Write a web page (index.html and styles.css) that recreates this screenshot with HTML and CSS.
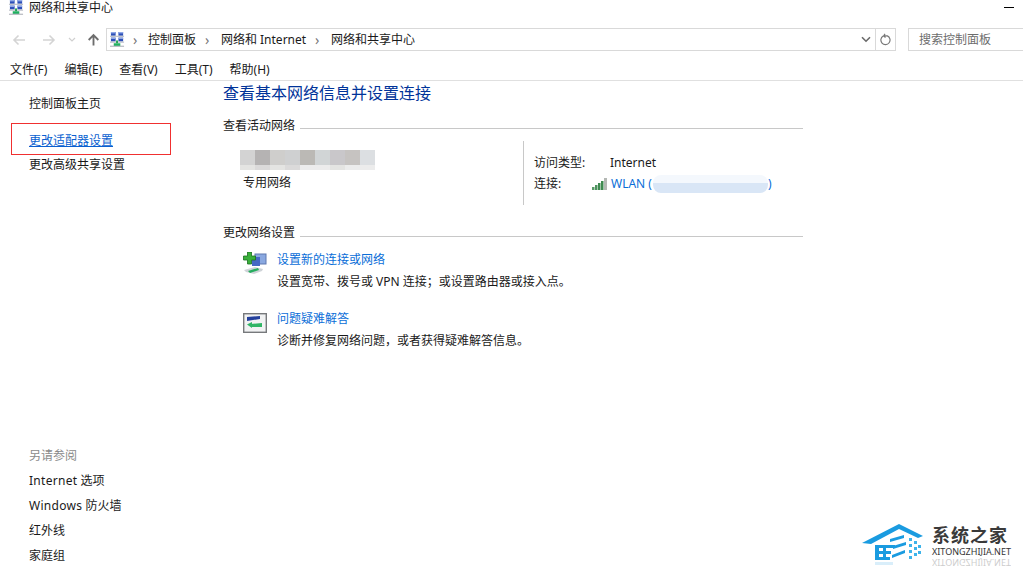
FILE: index.html
```html
<!DOCTYPE html>
<html lang="zh">
<head>
<meta charset="utf-8">
<title>网络和共享中心</title>
<link rel="stylesheet" href="styles.css">
</head>
<body>
<svg width="0" height="0" class="defs">
  <symbol id="net" viewBox="0 0 16 16">
    <rect x="1" y="0" width="5" height="4" fill="#2b4fb8"/><rect x="1" y="0" width="5" height="1.5" fill="#8fa8e6"/>
    <rect x="9" y="0" width="5" height="4" fill="#2b4fb8"/><rect x="9" y="0" width="5" height="1.5" fill="#8fa8e6"/>
    <rect x="1" y="6" width="5" height="4" fill="#2b4fb8"/><rect x="1" y="6" width="5" height="1.5" fill="#8fa8e6"/>
    <rect x="9" y="6" width="5" height="4" fill="#2b4fb8"/><rect x="9" y="6" width="5" height="1.5" fill="#8fa8e6"/>
    <rect x="0" y="4" width="15" height="1.2" fill="#b8bcc4"/>
    <rect x="0" y="10.2" width="15" height="1.2" fill="#b8bcc4"/>
    <rect x="6.5" y="9" width="2" height="3" fill="#20a050"/>
    <rect x="4" y="12" width="7" height="3" fill="#20b060"/>
    <rect x="0" y="14.6" width="15" height="1.2" fill="#b0b4bb"/>
  </symbol>
</svg>
<header class="title-bar">
  <svg class="title-icon"><use href="#net"/></svg>
  <span class="title-text">网络和共享中心</span>
  <span class="minimize"></span>
</header>
<nav class="nav-bar">
  <div class="nav-buttons">
    <svg class="nav-arrow back" viewBox="0 0 14 12"><path d="M13 6H2M6.5 1.5 2 6l4.500 4.500" fill="none" stroke="#d4d4d4" stroke-width="1.600"/></svg>
    <svg class="nav-arrow forward" viewBox="0 0 14 12"><path d="M1 6h11M7.500 1.500 12 6l-4.500 4.500" fill="none" stroke="#d4d4d4" stroke-width="1.600"/></svg>
    <svg class="nav-drop" viewBox="0 0 8 5"><path d="M1 1l3 3 3-3" fill="none" stroke="#d0d0d0" stroke-width="1.200"/></svg>
    <svg class="nav-up" viewBox="0 0 14 14"><path d="M7 13V2M1.800 7 7 1.800 12.200 7" fill="none" stroke="#6d6d6d" stroke-width="2"/></svg>
  </div>
  <div class="address">
    <svg class="addr-icon"><use href="#net"/></svg>
    <span class="crumb-sep">›</span><span class="crumb">控制面板</span>
    <span class="crumb-sep">›</span><span class="crumb">网络和 Internet</span>
    <span class="crumb-sep">›</span><span class="crumb">网络和共享中心</span>
    <svg class="addr-drop" viewBox="0 0 10 7"><path d="M1 1.200 5 5.200l4-4" fill="none" stroke="#6a6a6a" stroke-width="1.600"/></svg>
    <span class="addr-refresh"><svg viewBox="0 0 12 14"><path d="M3.500 3.200A5 5 0 1 0 8 3H4.500M5.500 .8 4 3l2 1.800" fill="none" stroke="#777" stroke-width="1.300"/></svg></span>
  </div>
  <div class="search">搜索控制面板</div>
</nav>
<div class="menu-bar">
  <span>文件(F)</span><span>编辑(E)</span><span>查看(V)</span><span>工具(T)</span><span>帮助(H)</span>
</div>
<div class="content">
  <aside class="sidebar">
    <div class="side-top">
      <a class="side-home">控制面板主页</a>
      <a class="side-active">更改适配器设置</a>
      <a class="side-adv">更改高级共享设置</a>
    </div>
    <div class="side-bottom">
      <div class="see-also">另请参阅</div>
      <a><span class="latin">Internet</span> 选项</a>
      <a><span class="latin">Windows</span> 防火墙</a>
      <a>红外线</a>
      <a>家庭组</a>
    </div>
  </aside>
  <main class="main">
    <h1 class="heading">查看基本网络信息并设置连接</h1>
    <div class="section-head"><span>查看活动网络</span><i></i></div>
    <div class="active-net">
      <div class="net-left">
        <div class="blur-row tall">
          <b class="g1"></b><b class="g2"></b><b class="g3"></b><b class="g4"></b><b class="g5"></b><b class="g6"></b><b class="g7"></b><b class="g8"></b><b class="g9"></b>
        </div>
        <div class="blur-row short">
          <b class="s1"></b><b class="s2"></b><b class="s1"></b><b class="s2"></b><b class="s3"></b><b class="s3"></b><b class="s1"></b><b class="s3"></b><b class="s3"></b>
        </div>
        <div class="net-type">专用网络</div>
      </div>
      <div class="net-right">
        <div class="net-row"><span class="net-label">访问类型:</span><span>Internet</span></div>
        <div class="net-row">
          <span class="net-label conn">连接:</span>
          <svg class="signal" viewBox="0 0 16 12">
            <rect x="0" y="9" width="2.500" height="3" fill="#5a9a68"/><rect x="3" y="7" width="2.500" height="5" fill="#4f9460"/><rect x="6" y="5" width="2.500" height="7" fill="#3f8a50"/><rect x="9" y="3" width="2.500" height="9" fill="#3f8a50"/><rect x="12" y="0" width="3" height="12" fill="#b4b8b4"/>
          </svg>
          <a class="link wlan">WLAN (</a>
          <span class="blur-wifi"></span>
          <a class="link">)</a>
        </div>
      </div>
    </div>
    <div class="section-head second"><span>更改网络设置</span><i></i></div>
    <div class="task">
      <svg class="task-icon" viewBox="0 0 24 24">
        <rect x="12" y="2" width="11" height="10" fill="#8aa8e0" stroke="#5f78b0"/>
        <rect x="9" y="5" width="8" height="9" fill="#4668c4"/>
        <path d="M4.500 0h4v4h4v4h-4v4h-4V8H.5V4h4z" fill="#39b03a" stroke="#1b6e1f" stroke-width=".8"/>
        <path d="M1 18 12 15l8 2-1 2-8 3-8-2z" fill="#cfd3d8"/>
        <path d="M5 19l10-3 1 2-9 3z" fill="#27ad5f"/>
      </svg>
      <div class="task-text"><a class="link">设置新的连接或网络</a><p>设置宽带、拨号或 VPN 连接；或设置路由器或接入点。</p></div>
    </div>
    <div class="task task-two">
      <svg class="task-icon" viewBox="0 0 24 24">
        <rect x=".7" y="2.700" width="22.600" height="18.600" fill="#f1f2f3" stroke="#77797c" stroke-width="1.400"/>
        <path d="M4 6l13-1v3L4 10z" fill="#24409c"/>
        <path d="M7 13 19 12v4H8z" fill="#2fb565"/>
        <path d="M4 13.500 9 11v6z" fill="#2fb565"/>
      </svg>
      <div class="task-text"><a class="link">问题疑难解答</a><p>诊断并修复网络问题，或者获得疑难解答信息。</p></div>
    </div>
  </main>
</div>
<div class="highlight"></div>
<div class="watermark">
  <svg class="wm-logo" viewBox="0 0 62 42">
    <path d="M0 19 37 0l24 12-5 2L37 5 9 20z" fill="#1a9be0"/>
    <path d="M13 21h4v15h-4zM13 21h20v3H13zM13 27h16v3H13zM13 33h15v3H13zM21 21h3v15h-3z" fill="#1a9be0"/>
    <path d="M28 15 42 11v3l-14 4zM31 22l13-4v3l-13 4zM30 31l13-5v3l-13 5z" fill="#1a9be0"/>
    <path d="M47 14h3v3h-3zM52 17h3v3h-3zM47 20h3v3h-3zM56 21h3v3h-3zM52 23h3v3h-3zM47 26h3v3h-3zM56 27h3v3h-3zM52 29h3v3h-3zM47 32h3v3h-3z" fill="#3db3ea"/>
    <path d="M13 38h18v3H13z" fill="#d9eefa"/>
  </svg>
  <div class="wm-text">
    <div class="wm-cn">系统之家</div>
    <div class="wm-en">XITONGZHIJIA.NET</div>
    <div class="wm-en mirror">XITONGZHIJIA.NET</div>
  </div>
</div>
</body>
</html>
```

FILE: styles.css
```css
* { box-sizing: border-box; }
html, body { margin: 0; height: 571px; overflow: hidden; }
body {
  position: relative;
  background: #fff;
  color: #1a1a1a;
  font: 12px/16px "Noto Sans", "Noto Sans CJK SC", sans-serif;
}
a { display: block; }
.defs { position: absolute; }
.title-bar { display: flex; align-items: center; height: 17px; padding-left: 9px; }
.title-icon { width: 15px; height: 15px; margin-top: -2px; }
.title-text { margin-left: 5px; margin-top: -2px; }
.minimize { width: 10px; height: 1px; background: #000; margin-left: auto; margin-right: 9px; margin-top: -3px; }
.nav-bar { display: flex; align-items: center; height: 23px; margin-top: 11px; }
.nav-buttons { display: flex; align-items: center; width: 106px; height: 23px; padding-left: 12px; }
.nav-arrow { width: 14px; height: 12px; }
.forward { margin-left: 16px; }
.nav-drop { width: 8px; height: 5px; margin-left: 12px; }
.nav-up { width: 13px; height: 14px; margin-left: 11px; }
.address { display: flex; align-items: center; width: 791px; height: 23px; border: 1px solid #d9d9d9; padding-left: 3px; white-space: nowrap; }
.addr-icon { width: 15px; height: 15px; flex: none; }
.crumb-sep { color: #777; width: 10px; margin-left: 9px; margin-right: 6px; font-size: 14px; line-height: 16px; }
.crumb-sep:first-of-type { margin-left: 8px; margin-right: 5px; }
.addr-drop { width: 10px; height: 7px; margin-left: auto; margin-right: 4px; }
.addr-refresh { display: flex; align-items: center; justify-content: center; width: 20px; height: 21px; border-left: 1px solid #d9d9d9; }
.addr-refresh svg { width: 11px; height: 13px; }
.search { width: 115px; height: 23px; margin-left: 12px; padding: 3px 0 0 10px; border: 1px solid #d9d9d9; border-right: 0; color: #6d6d6d; }
.menu-bar { display: flex; gap: 17px; height: 30px; padding: 11px 0 0 10px; border-bottom: 1px solid #e0e0e0; }
.content { display: flex; height: 490px; }
.sidebar { display: flex; flex-direction: column; width: 223px; padding-left: 29px; }
.side-top { padding-top: 15px; }
.side-active { margin-top: 21px; color: #0a5fd0; text-decoration: underline; }
.side-adv { margin-top: 8px; }
.side-bottom { margin-top: auto; padding-bottom: 7px; }
.side-bottom a { margin-top: 9px; }
.latin { letter-spacing: .3px; }
.see-also { color: #8a8a8a; }
.main { width: 580px; }
.heading { margin: 2px 0 0; font-size: 16px; line-height: 20px; font-weight: 400; color: #003399; }
.section-head { display: flex; align-items: flex-start; gap: 5px; margin-top: 15px; white-space: nowrap; }
.section-head i { flex: 1; height: 1px; background: #c8c8c8; margin-top: 10px; }
.second { margin-top: 20px; }
.second i { margin-top: 11px; }
.active-net { display: flex; margin-top: 7px; height: 64px; }
.net-left { width: 300px; padding: 9px 0 0 17px; }
.blur-row { display: flex; }
.blur-row b { width: 15px; }
.tall b { height: 15px; }
.short b { height: 5px; }
.g1 { background: #d3d3d3; } .g2 { background: #b5b3b3; } .g3 { background: #cfcecc; }
.g4 { background: #cfd0d1; } .g5 { background: #bbb9b5; } .g6 { background: #d1d5d6; }
.g7 { background: #c9c7ca; } .g8 { background: #c6c3c1; } .g9 { background: #dcdfe2; }
.s1 { background: #e4e4e2; } .s2 { background: #dbdada; } .s3 { background: #ececec; }
.net-type { margin: 5px 0 0 3px; }
.net-right { flex: 1; padding: 11px 0 0 10px; border-left: 1px solid #c8c8c8; height: 64px; }
.net-row { display: flex; align-items: center; height: 21px; white-space: nowrap; }
.net-label { width: 76px; }
.conn { width: 58px; }
.signal { width: 16px; height: 12px; margin-right: 3px; }
.link { color: #0a6ed8; }
.blur-wifi { width: 115px; height: 18px; background: linear-gradient(#f4f8fd 45%, #d9e6f6 45%); border-radius: 8px; margin-left: 1px; }
.task { display: flex; margin: 11px 0 0 20px; }
.task-two { margin-top: 21px; }
.task-icon { width: 24px; height: 24px; flex: none; }
.task-text { margin-left: 10px; }
.task-text p { margin: 6px 0 0; }
.highlight { position: absolute; left: 11px; top: 123px; width: 160px; height: 32px; border: 1px solid #f03030; }
.watermark { position: absolute; left: 862px; top: 524px; display: flex; align-items: flex-start; }
.wm-logo { width: 62px; height: 42px; flex: none; }
.wm-text { margin-left: 8px; }
.wm-cn { font: 700 18px/20px "Noto Sans CJK SC", sans-serif; color: #3a3a3a; letter-spacing: 1px; margin-bottom: 3px; }
.wm-en { font: 9px/10px "Noto Sans", sans-serif; color: #333; white-space: nowrap; }
.mirror { transform: scaleY(-1); opacity: .25; }
```
